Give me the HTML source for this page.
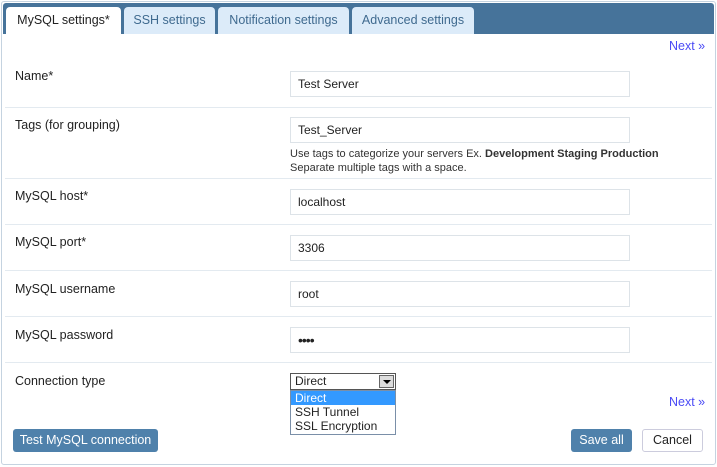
<!DOCTYPE html>
<html><head><style>
*{box-sizing:border-box;margin:0;padding:0}
body{width:717px;height:467px;background:#fff;font-family:"Liberation Sans",sans-serif;font-size:12px;color:#222;position:relative;overflow:hidden}
.frame{position:absolute;left:1px;top:1px;width:715px;height:464px;border:1px solid #c5d3e0;border-radius:3px}
.bar{position:absolute;left:3px;top:3px;width:711px;height:31px;background:#46739a;border-radius:3px 3px 0 0}
.tab{position:absolute;top:7px;height:27px;background:#dcebf9;border-radius:4px 4px 0 0;color:#3f6a8f;font-size:12.5px;text-align:center;line-height:26px}
.tab.a{background:#fff;color:#222}
.lbl{position:absolute;left:15px;font-size:12.5px}
.inp{position:absolute;left:290px;width:340px;height:26px;border:1px solid #dde3e8;padding-left:7px;line-height:24px;font-size:12px}
.sep{position:absolute;left:5px;width:707px;height:1px;background:#e3eaf0}
.next{position:absolute;left:669px;color:#4b4bf5;font-size:12.5px}
.btn{position:absolute;height:23px;border-radius:3px;line-height:23px;text-align:center;font-size:12.5px}
.blue{background:#4f81ab;color:#fff}
</style></head><body>
<div class="frame"></div>
<div class="bar"></div>
<div class="tab a" style="left:6px;width:115px">MySQL settings*</div>
<div class="tab" style="left:124px;width:91px">SSH settings</div>
<div class="tab" style="left:218px;width:131px">Notification settings</div>
<div class="tab" style="left:352px;width:122px">Advanced settings</div>
<div class="next" style="top:39px">Next »</div>

<div class="lbl" style="top:69px">Name*</div>
<div class="inp" style="top:71px">Test Server</div>
<div class="sep" style="top:107px"></div>
<div class="lbl" style="top:118px">Tags (for grouping)</div>
<div class="inp" style="top:117px">Test_Server</div>
<div style="position:absolute;left:290px;top:147px;font-size:11px;line-height:14px;color:#333">Use tags to categorize your servers Ex. <b>Development Staging Production</b><br>Separate multiple tags with a space.</div>
<div class="sep" style="top:178px"></div>
<div class="lbl" style="top:189px">MySQL host*</div>
<div class="inp" style="top:189px">localhost</div>
<div class="sep" style="top:224px"></div>
<div class="lbl" style="top:235px">MySQL port*</div>
<div class="inp" style="top:235px">3306</div>
<div class="sep" style="top:270px"></div>
<div class="lbl" style="top:282px">MySQL username</div>
<div class="inp" style="top:281px">root</div>
<div class="sep" style="top:316px"></div>
<div class="lbl" style="top:328px">MySQL password</div>
<div class="inp" style="top:327px;font-size:14px;letter-spacing:-1px">••••</div>
<div class="sep" style="top:362px"></div>
<div class="lbl" style="top:374px">Connection type</div>
<div style="position:absolute;left:290px;top:373px;width:106px;height:17px;border:1px solid #555;font-size:12px;line-height:15px;padding-left:4px">Direct
<div style="position:absolute;right:1px;top:1px;width:15px;height:13px;border:1px solid #666;background:#ddd"><div style="position:absolute;left:3px;top:4px;border-left:4px solid transparent;border-right:4px solid transparent;border-top:4px solid #000"></div></div></div>
<div style="position:absolute;left:290px;top:390px;width:106px;height:45px;border:1px solid #7a8fa8;background:#fff;font-size:12px;line-height:14px">
<div style="background:#3399ff;color:#fff;padding-left:4px">Direct</div>
<div style="padding-left:4px">SSH Tunnel</div>
<div style="padding-left:4px">SSL Encryption</div></div>
<div class="next" style="top:395px">Next »</div>
<div class="btn blue" style="left:13px;top:429px;width:145px">Test MySQL connection</div>
<div class="btn blue" style="left:571px;top:429px;width:61px">Save all</div>
<div class="btn" style="left:642px;top:429px;width:61px;border:1px solid #ccd;line-height:21px">Cancel</div>
</body></html>
